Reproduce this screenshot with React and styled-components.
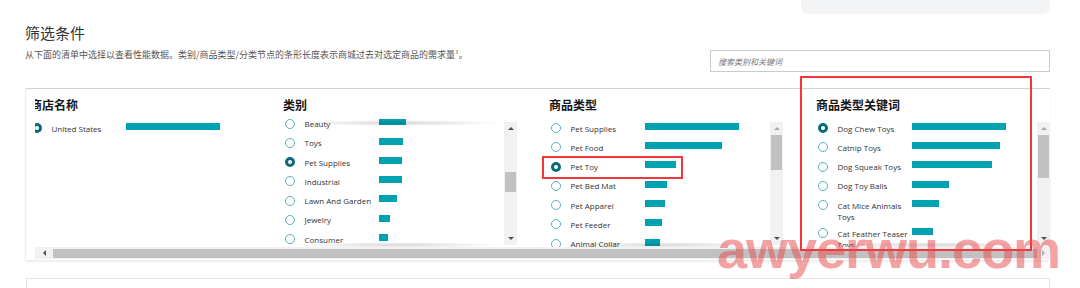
import React from 'react'
import styled, { createGlobalStyle, css } from 'styled-components'

const GlobalStyle = createGlobalStyle`
  body {
    margin: 0;
    background: #fff;
    font-family: "Open Sans", "Noto Sans CJK SC", sans-serif;
    overflow: hidden;
  }
`

const Page = styled.div`
  position: relative;
  width: 1080px;
  height: 288px;
  overflow: hidden;
`

const Content = styled.div`
  width: 1025px;
  padding-left: 25px;
`

const TopBar = styled.div`
  height: 14px;
  display: flex;
  justify-content: flex-end;
`

const GrayTab = styled.div`
  width: 249px;
  height: 14px;
  background: #f3f4f6;
  border-radius: 0 0 7px 7px;
`

const Title = styled.div`
  margin-top: 9px;
  font-family: "Noto Sans CJK SC", sans-serif;
  font-size: 15px;
  line-height: 20px;
  color: #333;
`

const IntroRow = styled.div`
  display: flex;
  justify-content: space-between;
  margin-top: 5px;
  height: 24px;
`

const Intro = styled.div`
  font-family: "Noto Sans CJK SC", sans-serif;
  font-size: 9px;
  line-height: 14px;
  color: #555;
`

const Search = styled.input`
  box-sizing: border-box;
  width: 340px;
  height: 22px;
  margin-top: 2px;
  border: 1px solid #c9cccc;
  padding: 0 7px;
  font-family: "Noto Sans CJK SC", sans-serif;
  font-size: 8px;
  font-style: italic;
  outline: none;
  &::placeholder {
    color: #777;
  }
`

const Panel = styled.div`
  margin-top: 16px;
  border-top: 1px solid #d2d2d2;
  border-left: 1px solid #eee;
  box-shadow: 0 2px 3px -1px rgba(0, 0, 0, 0.12);
  padding: 8px 0 1px 9px;
`

const Viewport = styled.div`
  width: 1015px;
  overflow: hidden;
`

const Columns = styled.div`
  display: grid;
  grid-template-columns: 253px 266px 267px 234px;
  margin-left: -5px;
`

const Column = styled.div`
  display: flex;
  flex-direction: column;
`

const ColHeader = styled.div`
  font-family: "Noto Sans CJK SC", sans-serif;
  font-size: 12px;
  font-weight: 700;
  line-height: 16px;
  color: #161616;
  white-space: nowrap;
  margin-bottom: 5.5px;
`

const ListArea = styled.div`
  display: flex;
  height: 128px;
`

const fade = css`
  content: '';
  position: absolute;
  left: 10px;
  right: 0;
  height: 6px;
  background: radial-gradient(ellipse at center, rgba(0, 0, 0, 0.16), rgba(0, 0, 0, 0) 70%);
`

const List = styled.div`
  position: relative;
  width: 221px;
  height: 128px;
  overflow: hidden;
  ${p => p.$topFade && css`&::before { ${fade}; top: 1px; }`}
  ${p => p.$bottomFade && css`&::after { ${fade}; bottom: -1px; }`}
`

const ListInner = styled.div`
  margin-top: ${p => p.$offset || 0}px;
`

const Row = styled.div`
  display: flex;
  align-items: flex-start;
  box-sizing: border-box;
  min-height: 19.3px;
  padding: 4px 0 2.3px 2px;
`

const Radio = styled.span`
  flex: none;
  box-sizing: border-box;
  width: 10px;
  height: 10px;
  margin-top: 0.5px;
  border-radius: 50%;
  background: #fff;
  border: ${p => (p.$checked ? '3px solid #0b6b7b' : '1.3px solid #5bb1bd')};
`

const Label = styled.span`
  flex: none;
  width: 74px;
  margin-left: 9.5px;
  font-size: 8px;
  line-height: 11px;
  color: #333;
`

const Bar = styled.span`
  flex: none;
  height: 7px;
  margin-top: 0.3px;
  background: #00a2b1;
`

const VScroll = styled.div`
  display: flex;
  flex-direction: column;
  width: 13px;
  height: 123px;
  margin-top: 3.5px;
  background: #f1f1f1;
`

const ArrowBtn = styled.div`
  flex: none;
  height: 13px;
  display: flex;
  align-items: center;
  justify-content: center;
  &::before {
    content: '';
    border-left: 3.5px solid transparent;
    border-right: 3.5px solid transparent;
    ${p => (p.$dir === 'up'
      ? css`border-bottom: 3.5px solid ${p.$disabled ? '#a8a8a8' : '#505050'};`
      : css`border-top: 3.5px solid ${p.$disabled ? '#a8a8a8' : '#505050'};`)}
  }
`

const Track = styled.div`
  flex: 1;
  display: flex;
  flex-direction: column;
  align-items: center;
`

const Thumb = styled.div`
  width: 11px;
  margin-top: ${p => p.$top}px;
  height: ${p => p.$h}px;
  background: #c1c1c1;
`

const HScroll = styled.div`
  display: flex;
  align-items: center;
  width: 1015px;
  height: 12px;
  margin-top: 0.5px;
  background: #f1f1f1;
`

const SideBtn = styled.div`
  flex: none;
  width: ${p => p.$w}px;
  height: 12px;
  display: flex;
  align-items: center;
  justify-content: center;
  &::before {
    content: '';
    border-top: 3.5px solid transparent;
    border-bottom: 3.5px solid transparent;
    ${p => (p.$dir === 'left'
      ? css`border-right: 3.5px solid #505050;`
      : css`border-left: 3.5px solid #b0b0b0;`)}
  }
`

const HThumb = styled.div`
  flex: 1;
  height: 9px;
  background: #c1c1c1;
`

const BottomBox = styled.div`
  margin-top: 18px;
  margin-left: 1px;
  height: 30px;
  border: 1px solid #e4e4e4;
`

const Mark = styled.div`
  position: absolute;
  left: ${p => p.$x}px;
  top: ${p => p.$y}px;
  width: ${p => p.$w}px;
  height: ${p => p.$h}px;
  box-sizing: border-box;
  border: 2px solid #f0383c;
  pointer-events: none;
`

const Watermark = styled.div`
  position: absolute;
  left: 717px;
  top: 222px;
  font-family: "Liberation Sans", Arial, sans-serif;
  font-weight: 700;
  font-size: 54px;
  line-height: 54px;
  letter-spacing: -1px;
  color: rgba(232, 72, 72, 0.5);
  white-space: nowrap;
  pointer-events: none;
`

const columns = [
  {
    title: '商店名称',
    items: [{ name: 'United States', w: 94, on: true }],
  },
  {
    title: '类别',
    offset: -4.5,
    topFade: true,
    bottomFade: true,
    scroll: { top: 37, h: 20, upDisabled: false },
    items: [
      { name: 'Beauty', w: 27 },
      { name: 'Toys', w: 24 },
      { name: 'Pet Supplies', w: 23, on: true },
      { name: 'Industrial', w: 23 },
      { name: 'Lawn And Garden', w: 18 },
      { name: 'Jewelry', w: 11 },
      { name: 'Consumer', w: 9 },
      { name: 'Home', w: 8 },
    ],
  },
  {
    title: '商品类型',
    bottomFade: true,
    scroll: { top: 0, h: 35, upDisabled: true },
    items: [
      { name: 'Pet Supplies', w: 94 },
      { name: 'Pet Food', w: 77 },
      { name: 'Pet Toy', w: 31, on: true },
      { name: 'Pet Bed Mat', w: 22 },
      { name: 'Pet Apparel', w: 20 },
      { name: 'Pet Feeder', w: 17 },
      { name: 'Animal Collar', w: 15 },
    ],
  },
  {
    title: '商品类型关键词',
    bottomFade: true,
    scroll: { top: 0, h: 43, upDisabled: true },
    items: [
      { name: 'Dog Chew Toys', w: 94, on: true },
      { name: 'Catnip Toys', w: 88 },
      { name: 'Dog Squeak Toys', w: 80 },
      { name: 'Dog Toy Balls', w: 37 },
      { name: 'Cat Mice Animals Toys', w: 27 },
      { name: 'Cat Feather Teaser Toys', w: 21 },
    ],
  },
]

function FilterColumn({ col }) {
  return (
    <Column>
      <ColHeader>{col.title}</ColHeader>
      <ListArea>
        <List $topFade={col.topFade} $bottomFade={col.bottomFade}>
          <ListInner $offset={col.offset}>
            {col.items.map(it => (
              <Row key={it.name}>
                <Radio $checked={it.on} />
                <Label>{it.name}</Label>
                <Bar style={{ width: it.w }} />
              </Row>
            ))}
          </ListInner>
        </List>
        {col.scroll && (
          <VScroll>
            <ArrowBtn $dir="up" $disabled={col.scroll.upDisabled} />
            <Track>
              <Thumb $top={col.scroll.top} $h={col.scroll.h} />
            </Track>
            <ArrowBtn $dir="down" />
          </VScroll>
        )}
      </ListArea>
    </Column>
  )
}

export default function App() {
  return (
    <Page>
      <GlobalStyle />
      <Content>
        <TopBar>
          <GrayTab />
        </TopBar>
        <Title>筛选条件</Title>
        <IntroRow>
          <Intro>从下面的清单中选择以查看性能数据。类别/商品类型/分类节点的条形长度表示商城过去对选定商品的需求量¹。</Intro>
          <Search placeholder="搜索类别和关键词" />
        </IntroRow>
        <Panel>
          <Viewport>
            <Columns>
              {columns.map(c => (
                <FilterColumn key={c.title} col={c} />
              ))}
            </Columns>
          </Viewport>
          <HScroll>
            <SideBtn $w={18} $dir="left" />
            <HThumb />
            <SideBtn $w={13} $dir="right" />
          </HScroll>
        </Panel>
        <BottomBox />
      </Content>
      <Mark $x={542} $y={156} $w={141} $h={23} />
      <Mark $x={800} $y={76} $w={232} $h={175} />
      <Watermark>awyerwu.com</Watermark>
    </Page>
  )
}
